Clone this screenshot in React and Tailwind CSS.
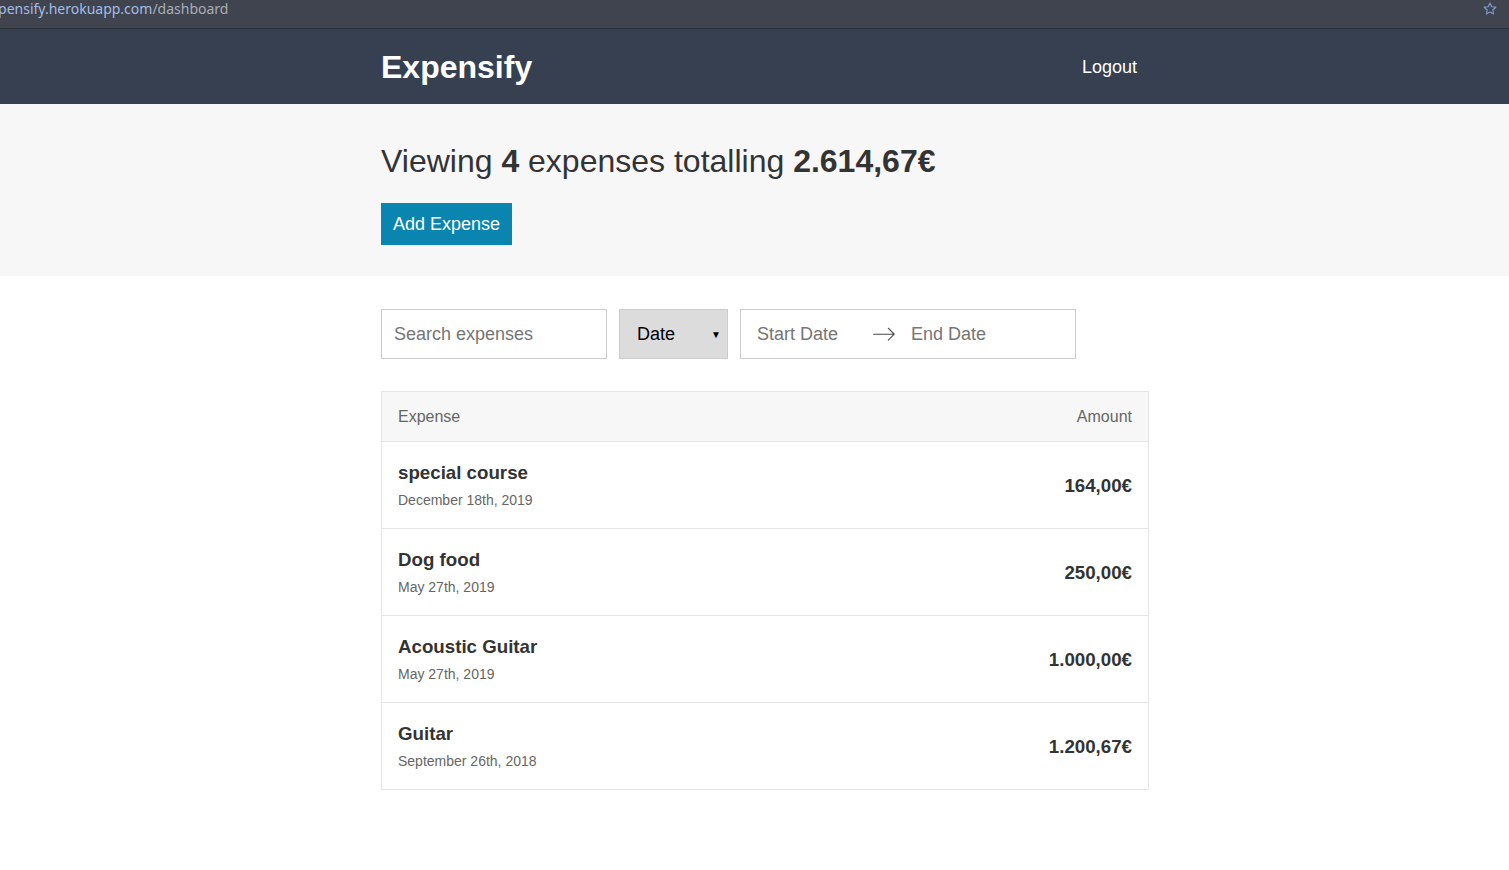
import React from "react";

const expenses = [
  { title: "special course", date: "December 18th, 2019", amount: "164,00€" },
  { title: "Dog food", date: "May 27th, 2019", amount: "250,00€" },
  { title: "Acoustic Guitar", date: "May 27th, 2019", amount: "1.000,00€" },
  { title: "Guitar", date: "September 26th, 2018", amount: "1.200,67€" },
];

function ArrowIcon() {
  return (
    <svg viewBox="0 0 1000 1000" className="w-[24px] h-[24px] fill-[#484848]">
      <path d="M694.4 242.4l249.1 249.1c11 11 11 21 0 32L694.4 772.7c-5 5-10 7-16 7s-11-2-16-7c-11-11-11-21 0-32l210.1-210.1H67.1c-13 0-23-10-23-23s10-23 23-23h805.4L662.4 274.5c-21-21.1 11-53.1 32-32.1z" />
    </svg>
  );
}

function BrowserBar() {
  return (
    <div className="h-[29px] bg-[#3f444e] border-b border-[#2b2f36] flex items-start justify-between overflow-hidden">
      <div className="-ml-[17px] mt-[-1px] text-[14px] leading-[20px] whitespace-nowrap" style={{ fontFamily: '"Noto Sans", sans-serif' }}>
        <span className="text-[#a3bde6]">expensify.herokuapp.com</span>
        <span className="text-[#a9adb5]">/dashboard</span>
      </div>
      <svg viewBox="0 0 24 24" className="w-[16px] h-[16px] mr-[11px] mt-[1px] fill-none stroke-[#7f97c2]" strokeWidth="1.8" strokeLinejoin="round">
        <path d="M12 3l2.6 5.6 6.1.7-4.5 4.2 1.2 6L12 16.5 6.6 19.5l1.2-6-4.5-4.2 6.1-.7z" />
      </svg>
    </div>
  );
}

export default function App() {
  return (
    <div className="min-h-screen bg-white text-[#333]" style={{ fontFamily: '"Liberation Sans", Arial, sans-serif' }}>
      <BrowserBar />

      <header className="bg-[#364051] h-[75px]">
        <div className="w-[768px] ml-[381px] h-full flex items-center justify-between">
          <h1 className="text-white text-[32px] font-bold leading-none">Expensify</h1>
          <button className="text-white text-[18px] px-[12px] leading-none mt-[1px]">Logout</button>
        </div>
      </header>

      <div className="bg-[#f7f7f7] pt-[39px] pb-[31px]">
        <div className="w-[768px] ml-[381px]">
          <h1 className="text-[32px] font-normal leading-[36px]">
            Viewing <span className="font-bold">4</span> expenses totalling{" "}
            <span className="font-bold">2.614,67€</span>
          </h1>
          <button className="mt-[24px] bg-[#0a85b0] text-white text-[18px] leading-[18px] px-[12px] py-[12px]">
            Add Expense
          </button>
        </div>
      </div>

      <div className="w-[768px] ml-[381px]">
        <div className="flex gap-[12px] mt-[33px]">
          <div className="w-[226px] h-[50px] border border-[#cacccd] flex items-center px-[12px] text-[18px] text-[#757575]">
            Search expenses
          </div>
          <div className="w-[109px] h-[50px] border border-[#cacccd] bg-[#dcdcdc] flex items-center justify-between pl-[17px] pr-[6px] text-[18px] text-black">
            <span>Date</span>
            <span className="text-[10px]">▼</span>
          </div>
          <div className="w-[336px] h-[50px] border border-[#cacccd] flex items-center pl-[16px] text-[18px] text-[#757575]">
            <span className="w-[115px]">Start Date</span>
            <ArrowIcon />
            <span className="ml-[15px]">End Date</span>
          </div>
        </div>

        <div className="mt-[32px] border border-[#e5e5e5] border-b-0">
          <div className="h-[50px] bg-[#f7f7f7] border-b border-[#e5e5e5] flex items-center justify-between px-[16px] text-[16px] text-[#666]">
            <span>Expense</span>
            <span>Amount</span>
          </div>
          {expenses.map((e) => (
            <div key={e.title} className="h-[87px] border-b border-[#e5e5e5] flex items-center justify-between px-[16px]">
              <div className="flex flex-col pt-[2px]">
                <h3 className="text-[18.72px] font-bold leading-[22px]">{e.title}</h3>
                <span className="text-[14px] text-[#666] leading-[20px] mt-[6px]">{e.date}</span>
              </div>
              <h3 className="text-[18.72px] font-bold leading-[22px] mt-[2px]">{e.amount}</h3>
            </div>
          ))}
        </div>
      </div>
    </div>
  );
}
